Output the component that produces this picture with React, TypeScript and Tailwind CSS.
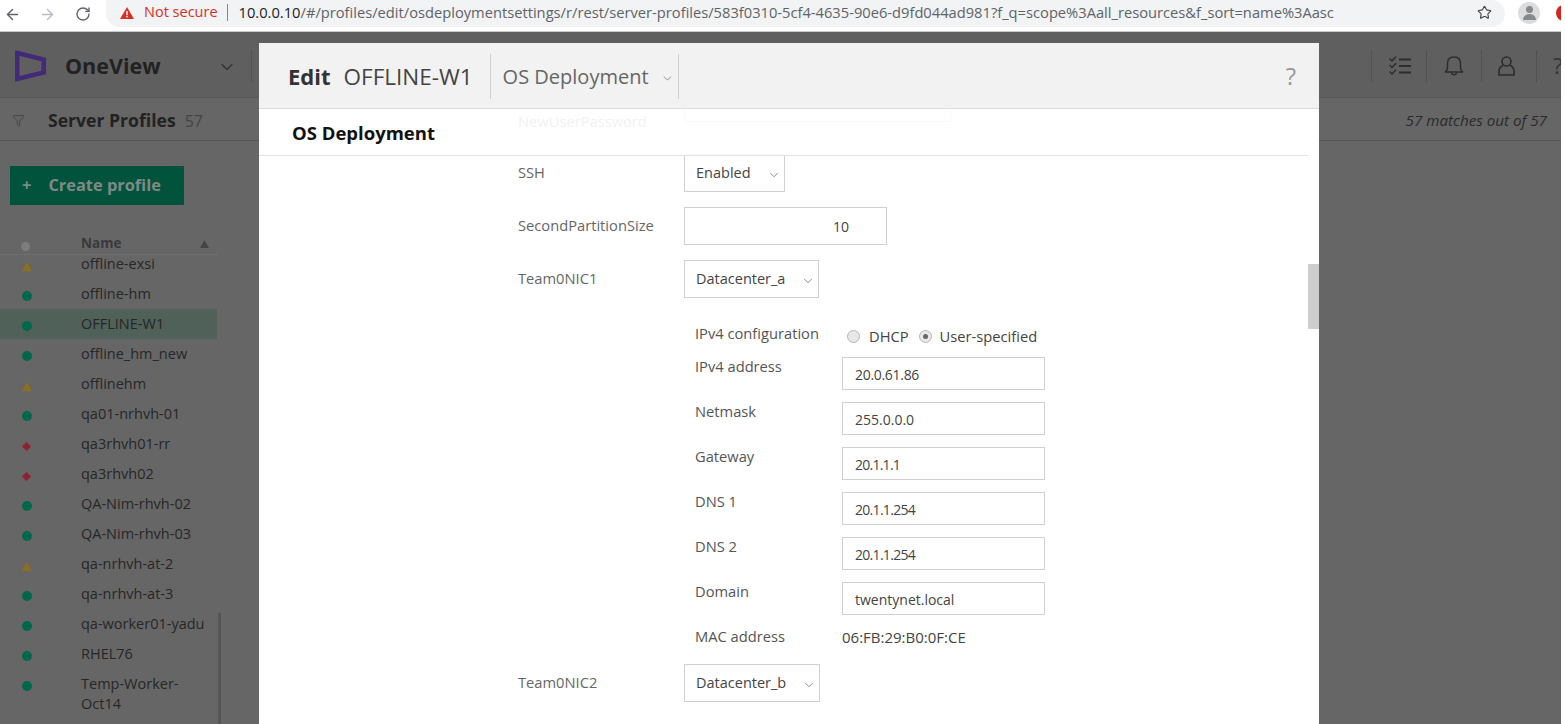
import React from 'react';
import { ArrowLeft, ArrowRight, RotateCw, Star, ChevronDown, Filter } from 'lucide-react';

const font = { fontFamily: '"Open Sans", "Noto Sans", sans-serif' };

type Status = 'ok' | 'warn' | 'err';

const profiles: { name: string; status: Status; selected?: boolean }[] = [
  { name: 'offline-exsi', status: 'warn' },
  { name: 'offline-hm', status: 'ok' },
  { name: 'OFFLINE-W1', status: 'ok', selected: true },
  { name: 'offline_hm_new', status: 'ok' },
  { name: 'offlinehm', status: 'warn' },
  { name: 'qa01-nrhvh-01', status: 'ok' },
  { name: 'qa3rhvh01-rr', status: 'err' },
  { name: 'qa3rhvh02', status: 'err' },
  { name: 'QA-Nim-rhvh-02', status: 'ok' },
  { name: 'QA-Nim-rhvh-03', status: 'ok' },
  { name: 'qa-nrhvh-at-2', status: 'warn' },
  { name: 'qa-nrhvh-at-3', status: 'ok' },
  { name: 'qa-worker01-yadu', status: 'ok' },
  { name: 'RHEL76', status: 'ok' },
  { name: 'Temp-Worker-Oct14', status: 'ok' },
];

// tracking: the original font has a much narrower "1"
const network = [
  { label: 'IPv4 address', value: '20.0.61.86', tracking: 'tracking-[-0.3px]' },
  { label: 'Netmask', value: '255.0.0.0', tracking: '' },
  { label: 'Gateway', value: '20.1.1.1', tracking: 'tracking-[-0.75px]' },
  { label: 'DNS 1', value: '20.1.1.254', tracking: 'tracking-[-0.7px]' },
  { label: 'DNS 2', value: '20.1.1.254', tracking: 'tracking-[-0.7px]' },
  { label: 'Domain', value: 'twentynet.local', tracking: '' },
];

function StatusDot({ status }: { status: Status }) {
  if (status === 'ok') return <span className="block w-[10px] h-[10px] rounded-full bg-[#01674c]" />;
  if (status === 'warn') {
    return (
      <svg width="10" height="9" viewBox="0 0 10 9">
        <polygon points="5,0 10,9 0,9" fill="#8f6f1c" />
      </svg>
    );
  }
  return (
    <svg width="9" height="9" viewBox="0 0 9 9">
      <polygon points="4.5,0 9,4.5 4.5,9 0,4.5" fill="#8f2230" />
    </svg>
  );
}

function SelectBox({ value, width }: { value: string; width: string }) {
  return (
    <div className={`${width} h-[38px] border border-[#d0d0d0] bg-white flex items-center justify-between pl-[11px] pr-[3px] text-[14.5px] text-[#444]`}>
      <span>{value}</span>
      <ChevronDown className="w-[14px] h-[14px] mt-[3px] text-[#666]" strokeWidth={1.3} />
    </div>
  );
}

function TaskIcon() {
  return (
    <svg width="22" height="20" viewBox="0 0 22 20" fill="none" stroke="currentColor" strokeWidth="1.5" className="ml-[2px]">
      <path d="M0.5 2.5 L3 5 L7 0.8" />
      <path d="M0.5 9 L3 11.5 L7 7.3" />
      <path d="M0.5 15.5 L3 18 L7 13.8" />
      <path d="M10 3.5 H22 M10 10 H22 M10 16.5 H22" strokeWidth="1.9" />
    </svg>
  );
}

function BellIcon() {
  return (
    <svg width="20" height="20" viewBox="0 0 20 20" fill="none" stroke="currentColor" strokeWidth="1.5">
      <path d="M1 16 C3 15 3.5 13.5 3.5 11 V7.5 C3.5 3.5 6 1 10 1 C14 1 16.5 3.5 16.5 7.5 V11 C16.5 13.5 17 15 19 16 Z" />
      <path d="M7.5 16.5 C7.5 19.5 12.5 19.5 12.5 16.5" />
    </svg>
  );
}

function UserIcon() {
  return (
    <svg width="17" height="20" viewBox="0 0 17 20" fill="none" stroke="currentColor" strokeWidth="1.6" className="-ml-[5px]">
      <circle cx="8.5" cy="5.5" r="4.5" />
      <path d="M5 9.5 C2.5 10.5 1 13 1 15.5 V19 H16 V15.5 C16 13 14.5 10.5 12 9.5" />
    </svg>
  );
}

function BrowserBar() {
  return (
    <div className="h-[32px] bg-white border-b border-[#c9c9c9] flex items-center shrink-0 pl-[4px] overflow-hidden">
      <ArrowLeft className="w-[17px] h-[17px] text-[#5f6368] -mt-[3px] shrink-0" strokeWidth={2} />
      <ArrowRight className="w-[17px] h-[17px] text-[#b9bcc0] ml-[18px] -mt-[3px] shrink-0" strokeWidth={2} />
      <RotateCw className="w-[16px] h-[16px] text-[#5f6368] ml-[19px] -mt-[3px] shrink-0" strokeWidth={2} />
      <div className="ml-[15px] w-[1399px] h-[27px] -mt-[5px] bg-[#f1f3f4] rounded-r-full rounded-bl-full flex items-center pl-[14px] pb-[1px] leading-none whitespace-nowrap shrink-0">
        <svg width="14" height="12" viewBox="0 0 14 12" className="shrink-0">
          <path d="M7 0 L14 12 L0 12 Z" fill="#d93025" />
          <rect x="6.3" y="4" width="1.4" height="4.2" fill="#fff" />
          <rect x="6.3" y="9" width="1.4" height="1.4" fill="#fff" />
        </svg>
        <span className="ml-[10px] text-[14.5px] text-[#d93025]">Not secure</span>
        <span className="ml-[9px] w-px h-[17px] bg-[#80868b]" />
        <span className="ml-[11px] text-[14.7px] text-[#202124]">10.0.0.10</span>
        <span className="text-[14.7px] text-[#5f6368]">/#/profiles/edit/osdeploymentsettings/r/rest/server-profiles/583f0310-5cf4-4635-90e6-d9fd044ad981?f_q=scope%3Aall_resources&amp;f_sort=name%3Aasc</span>
        <Star className="w-[15px] h-[15px] text-[#444] ml-auto mr-[13px] shrink-0" strokeWidth={1.8} />
      </div>
      <div className="ml-[13px] w-[22px] h-[22px] -mt-[5px] rounded-full bg-[#dadce0] flex flex-col items-center justify-center overflow-hidden shrink-0">
        <span className="w-[7px] h-[7px] rounded-full bg-[#888]" />
        <span className="w-[13px] h-[6px] rounded-t-full bg-[#888] mt-[1px]" />
      </div>
      <span className="ml-[16px] w-[16px] h-[16px] -mt-[6px] rounded-full bg-[#d3251c] shrink-0" />
    </div>
  );
}

function AppHeader() {
  return (
    <div className="h-[66px] shrink-0 bg-[#5f5f5f] border-b border-[#595959] flex items-center pl-[15px] pt-[2px]">
      <svg width="31" height="32" viewBox="0 0 31 32" className="shrink-0">
        <path d="M2.3 3 L28.7 9.5 L28.7 22.5 L2.3 29 Z" fill="none" stroke="#422a78" strokeWidth="4.5" />
      </svg>
      <span className="ml-[19px] text-[21.5px] font-bold text-[#222] pt-[2px]">OneView</span>
      <ChevronDown className="w-[20px] h-[20px] text-[#333] ml-[56px] mt-[3px]" strokeWidth={1.5} />
      <span className="ml-[14px] w-px h-[32px] bg-[#525252]" />
      <div className="ml-auto flex items-center h-[32px] w-[190px] text-[#2d2d2d]">
        <span className="w-px h-[32px] bg-[#525252]" />
        <span className="w-[54px] flex justify-center"><TaskIcon /></span>
        <span className="w-px h-[32px] bg-[#525252]" />
        <span className="w-[55px] flex justify-center"><BellIcon /></span>
        <span className="w-px h-[32px] bg-[#525252]" />
        <span className="w-[54px] flex justify-center"><UserIcon /></span>
        <span className="w-px h-[32px] bg-[#525252]" />
        <span className="ml-[16px] w-[8px] overflow-hidden text-[22px] text-[#333]">?</span>
      </div>
    </div>
  );
}

function Toolbar() {
  return (
    <div className="h-[43px] shrink-0 bg-[#666] border-b border-[#585858] flex items-center pl-[12px] pr-[14px] pt-[3px]">
      <Filter className="w-[13px] h-[13px] text-[#3f3f3f]" strokeWidth={1.5} />
      <span className="ml-[23px] text-[17.6px] font-bold text-[#222]">Server Profiles</span>
      <span className="ml-[9px] text-[16px] text-[#444]">57</span>
      <span className="ml-auto text-[15.2px] italic text-[#2b2b2b]">57 matches out of 57</span>
    </div>
  );
}

function Sidebar() {
  return (
    <div className="w-[221px] relative">
      <div className="ml-[10px] mt-[25px] w-[174px] h-[39px] bg-[#01533c] flex items-center pl-[12px] text-[16.4px] font-bold text-[#7f8a86]">
        <span>+</span>
        <span className="ml-[17px]">Create profile</span>
      </div>
      <div className="mt-[28px] h-[22px] w-[217px] border-b border-dotted border-[#777] flex items-center text-[13.5px] font-bold text-[#3a3a3a]">
        <span className="ml-[21px] mt-[6px] w-[9px] h-[9px] rounded-full bg-[#7d7d7d]" />
        <span className="ml-[51px]">Name</span>
        <svg width="9" height="8" viewBox="0 0 9 8" className="ml-auto mr-[8px]">
          <polygon points="4.5,0 9,8 0,8" fill="#444" />
        </svg>
      </div>
      <div className="-mt-[6px]">
        {profiles.map((p) => (
          <div key={p.name} className={`w-[217px] flex items-start py-[5px] text-[14.5px] leading-[20px] text-[#262626] ${p.selected ? 'bg-[#4f6159]' : ''}`}>
            <span className="w-[81px] h-[20px] shrink-0 flex items-center justify-center pr-[28px] pt-[4px]">
              <StatusDot status={p.status} />
            </span>
            <span className="w-[130px] break-words">{p.name === 'Temp-Worker-Oct14' ? <>Temp-Worker-<br />Oct14</> : p.name}</span>
          </div>
        ))}
      </div>
      <span className="absolute left-[218px] top-[472px] w-[3px] h-[111px] bg-[#555]" />
    </div>
  );
}

function EditDialog() {
  return (
    <div className="absolute left-[259px] top-[43px] bottom-0 w-[1060px] bg-white flex flex-col overflow-hidden">
      <div className="h-[66px] shrink-0 bg-[#f2f2f2] border-b border-[#dcdcdc] flex items-center pl-[29px] pr-[23px]">
        <span className="text-[22px] font-bold text-[#333] pt-[2px]">Edit</span>
        <span className="ml-[13px] text-[22.5px] text-[#444] pt-[2px]">OFFLINE-W1</span>
        <span className="ml-[17px] w-px h-[45px] bg-[#d0d0d0] mt-[2px]" />
        <span className="ml-[12px] text-[20px] text-[#666] pt-[2px]">OS Deployment</span>
        <ChevronDown className="w-[13px] h-[13px] ml-[12px] mt-[6px] text-[#777]" strokeWidth={1.5} />
        <span className="ml-[4px] w-px h-[45px] bg-[#d0d0d0] mt-[2px]" />
        <span className="ml-auto text-[24px] text-[#999]">?</span>
      </div>

      <div className="flex-1 relative overflow-hidden">
        {/* scrolled form, first row is partly under the section heading */}
        <div className="pl-[259px] -mt-[25px]">
          <div className="flex">
            <span className="w-[166px] mt-[27px] -mb-[9px] text-[14.7px] leading-[20px] text-[#666]">NewUserPassword</span>
            <div className="w-[267px] h-[38px] border border-[#d0d0d0]" />
          </div>
          <div className="flex items-center mt-[32px]">
            <span className="w-[166px] -mt-[2px] text-[14.7px] text-[#666]">SSH</span>
            <SelectBox value="Enabled" width="w-[101px]" />
          </div>
          <div className="flex items-center mt-[15px]">
            <span className="w-[166px] -mt-[2px] text-[14.7px] text-[#666]">SecondPartitionSize</span>
            <div className="w-[203px] h-[38px] border border-[#d0d0d0] flex items-center justify-end pr-[37px] text-[14px] text-[#444]">10</div>
          </div>
          <div className="flex items-center mt-[15px]">
            <span className="w-[166px] -mt-[2px] text-[14.7px] text-[#666]">Team0NIC1</span>
            <SelectBox value="Datacenter_a" width="w-[135px]" />
          </div>

          <div className="ml-[177px] mt-[26px] text-[14px] text-[#444]">
            <div className="flex h-[20px] leading-[20px]">
              <span className="w-[147px] -mt-[1px] text-[14.7px] text-[#555] whitespace-nowrap">IPv4 configuration</span>
              <div className="flex items-center mt-[4px] text-[14.7px]">
                <span className="ml-[5px] w-[13px] h-[13px] rounded-full border border-[#b5b5b5] bg-[#e8e8e8]" />
                <span className="ml-[9px]">DHCP</span>
                <span className="ml-[10px] w-[13px] h-[13px] rounded-full border border-[#b5b5b5] bg-[#e8e8e8] flex items-center justify-center">
                  <span className="w-[5px] h-[5px] rounded-full bg-[#666]" />
                </span>
                <span className="ml-[8px]">User-specified</span>
              </div>
            </div>
            <div className="mt-[13px] flex flex-col gap-[12px]">
              {network.map((n) => (
                <div key={n.label} className="flex h-[33px]">
                  <span className="w-[147px] -mt-[1px] text-[14.7px] leading-[20px] text-[#555]">{n.label}</span>
                  <div className={`w-[203px] border border-[#d0d0d0] flex items-center pl-[12px] pt-[2px] ${n.tracking}`}>{n.value}</div>
                </div>
              ))}
            </div>
            <div className="flex mt-[12px] h-[20px] leading-[20px]">
              <span className="w-[147px] -mt-[1px] text-[14.7px] text-[#555]">MAC address</span>
              <span className="text-[15px]">06:FB:29:B0:0F:CE</span>
            </div>
          </div>

          <div className="flex items-center mt-[17px]">
            <span className="w-[166px] -mt-[2px] text-[14.7px] text-[#666]">Team0NIC2</span>
            <SelectBox value="Datacenter_b" width="w-[136px]" />
          </div>
        </div>

        {/* heading stays over the scrolled form */}
        <div className="absolute left-0 top-0 right-[11px] h-[47px] bg-white/90 border-b border-[#e2e2e2] flex items-center pl-[33px] pt-[2px] text-[18.5px] font-bold text-[#111]">
          OS Deployment
        </div>
        <span className="absolute right-0 top-[155px] w-[11px] h-[65px] bg-[#cdcdcd]" />
      </div>
    </div>
  );
}

export default function App() {
  return (
    <div className="w-[1565px] h-[724px] bg-white relative overflow-hidden" style={font}>
      <div className="w-[1561px] h-full bg-[#666] flex flex-col">
        <BrowserBar />
        <AppHeader />
        <Toolbar />
        <Sidebar />
      </div>
      <EditDialog />
    </div>
  );
}
